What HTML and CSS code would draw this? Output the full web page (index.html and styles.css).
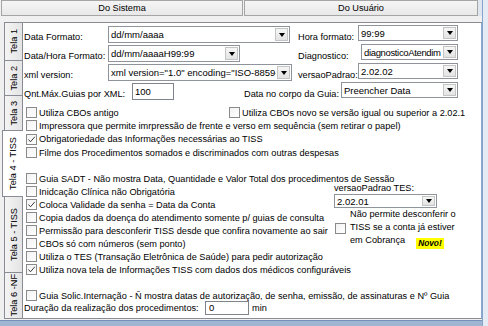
FILE: index.html
```html
<!DOCTYPE html>
<html>
<head>
<meta charset="utf-8">
<link rel="stylesheet" href="styles.css">
</head>
<body>
<div class="window">
  <div class="main">
    <div class="toptabs">
      <div class="toptab tt1">Do Sistema</div>
      <div class="toptab tt2">Do Usuário</div>
      <div class="toprest"></div>
    </div>
    <div class="tabhost">
      <div class="sidetabs">
        <div class="stab h1"><span>Tela 1</span></div>
        <div class="stab h2"><span>Tela 2</span></div>
        <div class="stab h3"><span>Tela 3</span></div>
        <div class="stab h4 sel"><span>Tela 4 - TISS</span></div>
        <div class="stab h5"><span>Tela 5 - TISS</span></div>
        <div class="stab h6"><span>Tela 6 -NF</span></div>
      </div>
      <div class="panel">
        <div class="frow">
          <div class="lc">
            <span class="lbl w84">Data Formato:</span>
            <div class="combo w182"><span class="v">dd/mm/aaaa</span><span class="btn"></span></div>
          </div>
          <span class="lbl rl">Hora formato:</span>
          <div class="combo cr w100"><span class="v">99:99</span><span class="btn"></span></div>
        </div>
        <div class="frow">
          <div class="lc">
            <span class="lbl w84">Data/Hora Formato:</span>
            <div class="combo w132"><span class="v">dd/mm/aaaaH99:99</span><span class="btn"></span></div>
          </div>
          <span class="lbl rl rl2">Diagnostico:</span>
          <div class="combo cr w97"><span class="v fit">diagnosticoAtendim</span><span class="btn"></span></div>
        </div>
        <div class="frow">
          <div class="lc">
            <span class="lbl w84">xml version:</span>
            <div class="combo w184"><span class="v">xml version="1.0" encoding="ISO-8859-1"</span><span class="btn"></span></div>
          </div>
          <span class="lbl rl">versaoPadrao:</span>
          <div class="combo cr w100"><span class="v">2.02.02</span><span class="btn"></span></div>
        </div>
        <div class="frow">
          <div class="lc lc2">
            <span class="lbl w108">Qnt.Máx.Guias por XML:</span>
            <div class="inp w42">100</div>
          </div>
          <span class="lbl w97">Data no corpo da Guia:</span>
          <div class="combo cr w117"><span class="v">Preencher Data</span><span class="btn"></span></div>
        </div>

        <div class="checks g1">
          <div class="pair">
            <div class="chk wl"><span class="box"></span>Utiliza CBOs antigo</div>
            <div class="chk"><span class="box"></span>Utiliza CBOs novo se versão igual ou superior a 2.02.1</div>
          </div>
          <div class="chk"><span class="box"></span>Impressora que permite imrpressão de frente e verso em sequência (sem retirar o papel)</div>
          <div class="chk"><span class="box on"><svg viewBox="0 0 9 9" width="9" height="9"><polyline points="1.5,4.5 3.5,6.8 7.8,1.8" fill="none" stroke="#3c3c3c" stroke-width="1"/></svg></span>Obrigatoriedade das Informações necessárias ao TISS</div>
          <div class="chk"><span class="box"></span>Filme dos Procedimentos somados e discriminados com outras despesas</div>
        </div>

        <div class="checks g2">
          <div class="chk c2"><span class="box"></span>Guia SADT - Não mostra Data, Quantidade e Valor Total dos procedimentos de Sessão</div>
          <div class="split">
            <div class="colL">
              <div class="chk c2"><span class="box"></span>Inidcação Clínica não Obrigatória</div>
              <div class="chk c2"><span class="box on"><svg viewBox="0 0 9 9" width="9" height="9"><polyline points="1.5,4.5 3.5,6.8 7.8,1.8" fill="none" stroke="#3c3c3c" stroke-width="1"/></svg></span>Coloca Validade da senha = Data da Conta</div>
              <div class="chk c2"><span class="box"></span>Copia dados da doença do atendimento somente p/ guias de consulta</div>
              <div class="chk c2"><span class="box"></span>Permissão para desconferir TISS desde que confira novamente ao sair</div>
              <div class="chk c2"><span class="box"></span>CBOs só com números (sem ponto)</div>
              <div class="chk c2"><span class="box"></span>Utiliza o TES (Transação Eletrônica de Saúde) para pedir autorização</div>
              <div class="chk c2"><span class="box on"><svg viewBox="0 0 9 9" width="9" height="9"><polyline points="1.5,4.5 3.5,6.8 7.8,1.8" fill="none" stroke="#3c3c3c" stroke-width="1"/></svg></span>Utiliza nova tela de Informações TISS com dados dos médicos configuráveis</div>
            </div>
            <div class="colR">
              <div class="lbl tesl">versaoPadrao TES:</div>
              <div class="combo w103 tes"><span class="v">2.02.01</span><span class="btn"></span></div>
              <div class="nperm">
                <span class="box"></span>
                <div class="ntext">Não permite desconferir o<br>TISS se a conta já estiver<br>em Cobrança<span class="novo">Novo!</span></div>
              </div>
            </div>
          </div>
        </div>

        <div class="checks g3">
          <div class="chk c2"><span class="box"></span>Guia Solic.Internação - Ñ mostra datas de autorização, de senha, emissão, de assinaturas e Nº Guia</div>
        </div>
        <div class="drow">
          <span class="lbl w181">Duração da realização dos procedimentos:</span>
          <div class="inp w44">0</div>
          <span class="lbl mn">min</span>
        </div>
      </div>
    </div>
    <div class="bottomstrip"></div>
  </div>
  <div class="frame"></div>
</div>
</body>
</html>
```

FILE: styles.css
```css
* { box-sizing: border-box; }
html, body { margin: 0; padding: 0; }
body {
  width: 488px;
  height: 326px;
  overflow: hidden;
  background: #f0f0f0;
  font-family: "Liberation Sans", Arial, sans-serif;
  font-size: 9.2px;
  color: #000;
}
.window { display: flex; height: 326px; }
.main { width: 482px; display: flex; flex-direction: column; }
.frame {
  flex: 1;
  background: #e4ebf4;
  border-left: 1px solid #86a3cb;
}

/* top tabs */
.toptabs { display: flex; height: 16px; padding-left: 1px; }
.toptab {
  height: 16px;
  line-height: 14px;
  text-align: center;
  border: 1px solid #a5a5a5;
  background: linear-gradient(#f5f5f5, #e8e8e8);
  white-space: nowrap;
}
.tt1 { width: 242px; }
.tt2 { width: 234px; margin-left: 1px; }
.toprest { flex: 1; background: #dfe6ef; }

/* tab host */
.tabhost { display: flex; margin-top: 6px; height: 298px; }
.sidetabs { width: 22px; display: flex; flex-direction: column; flex: none; }
.stab {
  width: 18px;
  margin-left: 4px;
  margin-bottom: -1px;
  border: 1px solid #898c95;
  border-right: none;
  background: linear-gradient(to right, #f4f4f4, #e4e4e4);
  display: flex;
  align-items: center;
  justify-content: center;
}
.stab span {
  writing-mode: vertical-rl;
  transform: rotate(180deg);
  white-space: nowrap;
  line-height: 12px;
}
.stab.sel {
  width: 21px;
  margin-left: 2px;
  background: #fff;
  position: relative;
  z-index: 2;
}
.h1 { height: 39px; }
.h2 { height: 36px; }
.h3 { height: 36px; }
.h4 { height: 67px; }
.h5 { height: 77px; }
.h6 { height: 47px; }

.panel {
  width: 460px;
  height: 297px;
  background: #fff;
  border: 1px solid #898c95;
  border-right-color: #8aa8d0;
  padding: 3px 0 0 1px;
  flex: none;
}

/* form rows */
.frow { display: flex; align-items: flex-end; height: 17px; margin-bottom: 2px; }
.lc { display: flex; align-items: flex-end; width: 274px; height: 100%; flex: none; }
.lc2 { width: 220px; }
.lbl { white-space: nowrap; line-height: 11px; flex: none; }
.w84 { width: 84px; }
.w97 { width: 97px; }
.w108 { width: 108px; }
.w181 { width: 181px; }
.rl { width: 60px; }
.rl2 { width: 63px; }

.combo {
  height: 17px;
  border: 1px solid #8f939b;
  background: #fff;
  display: flex;
  align-items: center;
  padding-left: 2px;
  flex: none;
  font-size: 9.5px;
}
.combo .v { flex: 1; min-width: 0; overflow: hidden; white-space: nowrap; }
.combo .v.fit { letter-spacing: -0.35px; }
.combo .btn {
  width: 13px;
  height: 13px;
  margin: 0 1px 0 1px;
  border: 1px solid #c4c4c4;
  background: linear-gradient(#f6f6f6, #e3e3e3);
  display: flex;
  align-items: center;
  justify-content: center;
  flex: none;
}
.combo .btn::after {
  content: "";
  border-left: 3.5px solid transparent;
  border-right: 3.5px solid transparent;
  border-top: 4px solid #000;
}
.cr { height: 16px; margin-bottom: 2px; }
.cr .btn { height: 12px; }
.w182 { width: 182px; }
.w132 { width: 132px; }
.w184 { width: 184px; }
.w100 { width: 100px; }
.w97 { width: 97px; }
.w117 { width: 117px; }
.w103 { width: 103px; }

.inp {
  height: 17px;
  border: 1px solid #7f848c;
  background: #fff;
  padding-left: 2px;
  line-height: 15px;
  font-size: 9.5px;
  flex: none;
}
.w42 { width: 42px; }
.w44 { width: 44px; height: 14px; line-height: 12px; padding-left: 3px; }

/* checkboxes */
.checks { display: flex; flex-direction: column; }
.g1 { margin-top: 6px; }
.g2 { margin-top: 13px; }
.g3 { margin-top: 13px; }
.chk {
  display: flex;
  align-items: center;
  height: 13.3px;
  white-space: nowrap;
  padding-left: 2px;
}
.chk.c2 { height: 13px; }
.pair { display: flex; }
.wl { width: 203px; }
.box {
  width: 11px;
  height: 11px;
  border: 1px solid #8a8a8a;
  background: linear-gradient(135deg, #f2f2f2, #fff);
  margin-right: 2px;
  flex: none;
  display: flex;
  align-items: center;
  justify-content: center;
}
.split { display: flex; }
.colL { width: 310px; flex: none; }
.colR { display: flex; flex-direction: column; margin-top: -2px; }
.tesl { line-height: 10px; height: 10px; }
.tes { height: 14px; margin-top: 1px; }
.tes .btn { height: 10px; }
.nperm { display: flex; align-items: center; margin-top: 0; padding-left: 1px; }
.nperm .box { margin-right: 4px; }
.ntext { line-height: 13px; white-space: nowrap; }
.novo {
  display: inline-block;
  margin-left: 11px;
  background: #ffff00;
  font-weight: bold;
  font-style: italic;
  font-size: 8.3px;
  line-height: 11px;
  padding: 0 2px;
  vertical-align: -3px;
}

.drow { display: flex; align-items: center; height: 14px; margin-top: -1px; }
.mn { margin-left: 3px; }

.bottomstrip {
  height: 6px;
  background: #9fb5d2;
  border-top: 1px solid #7390b8;
}
```
